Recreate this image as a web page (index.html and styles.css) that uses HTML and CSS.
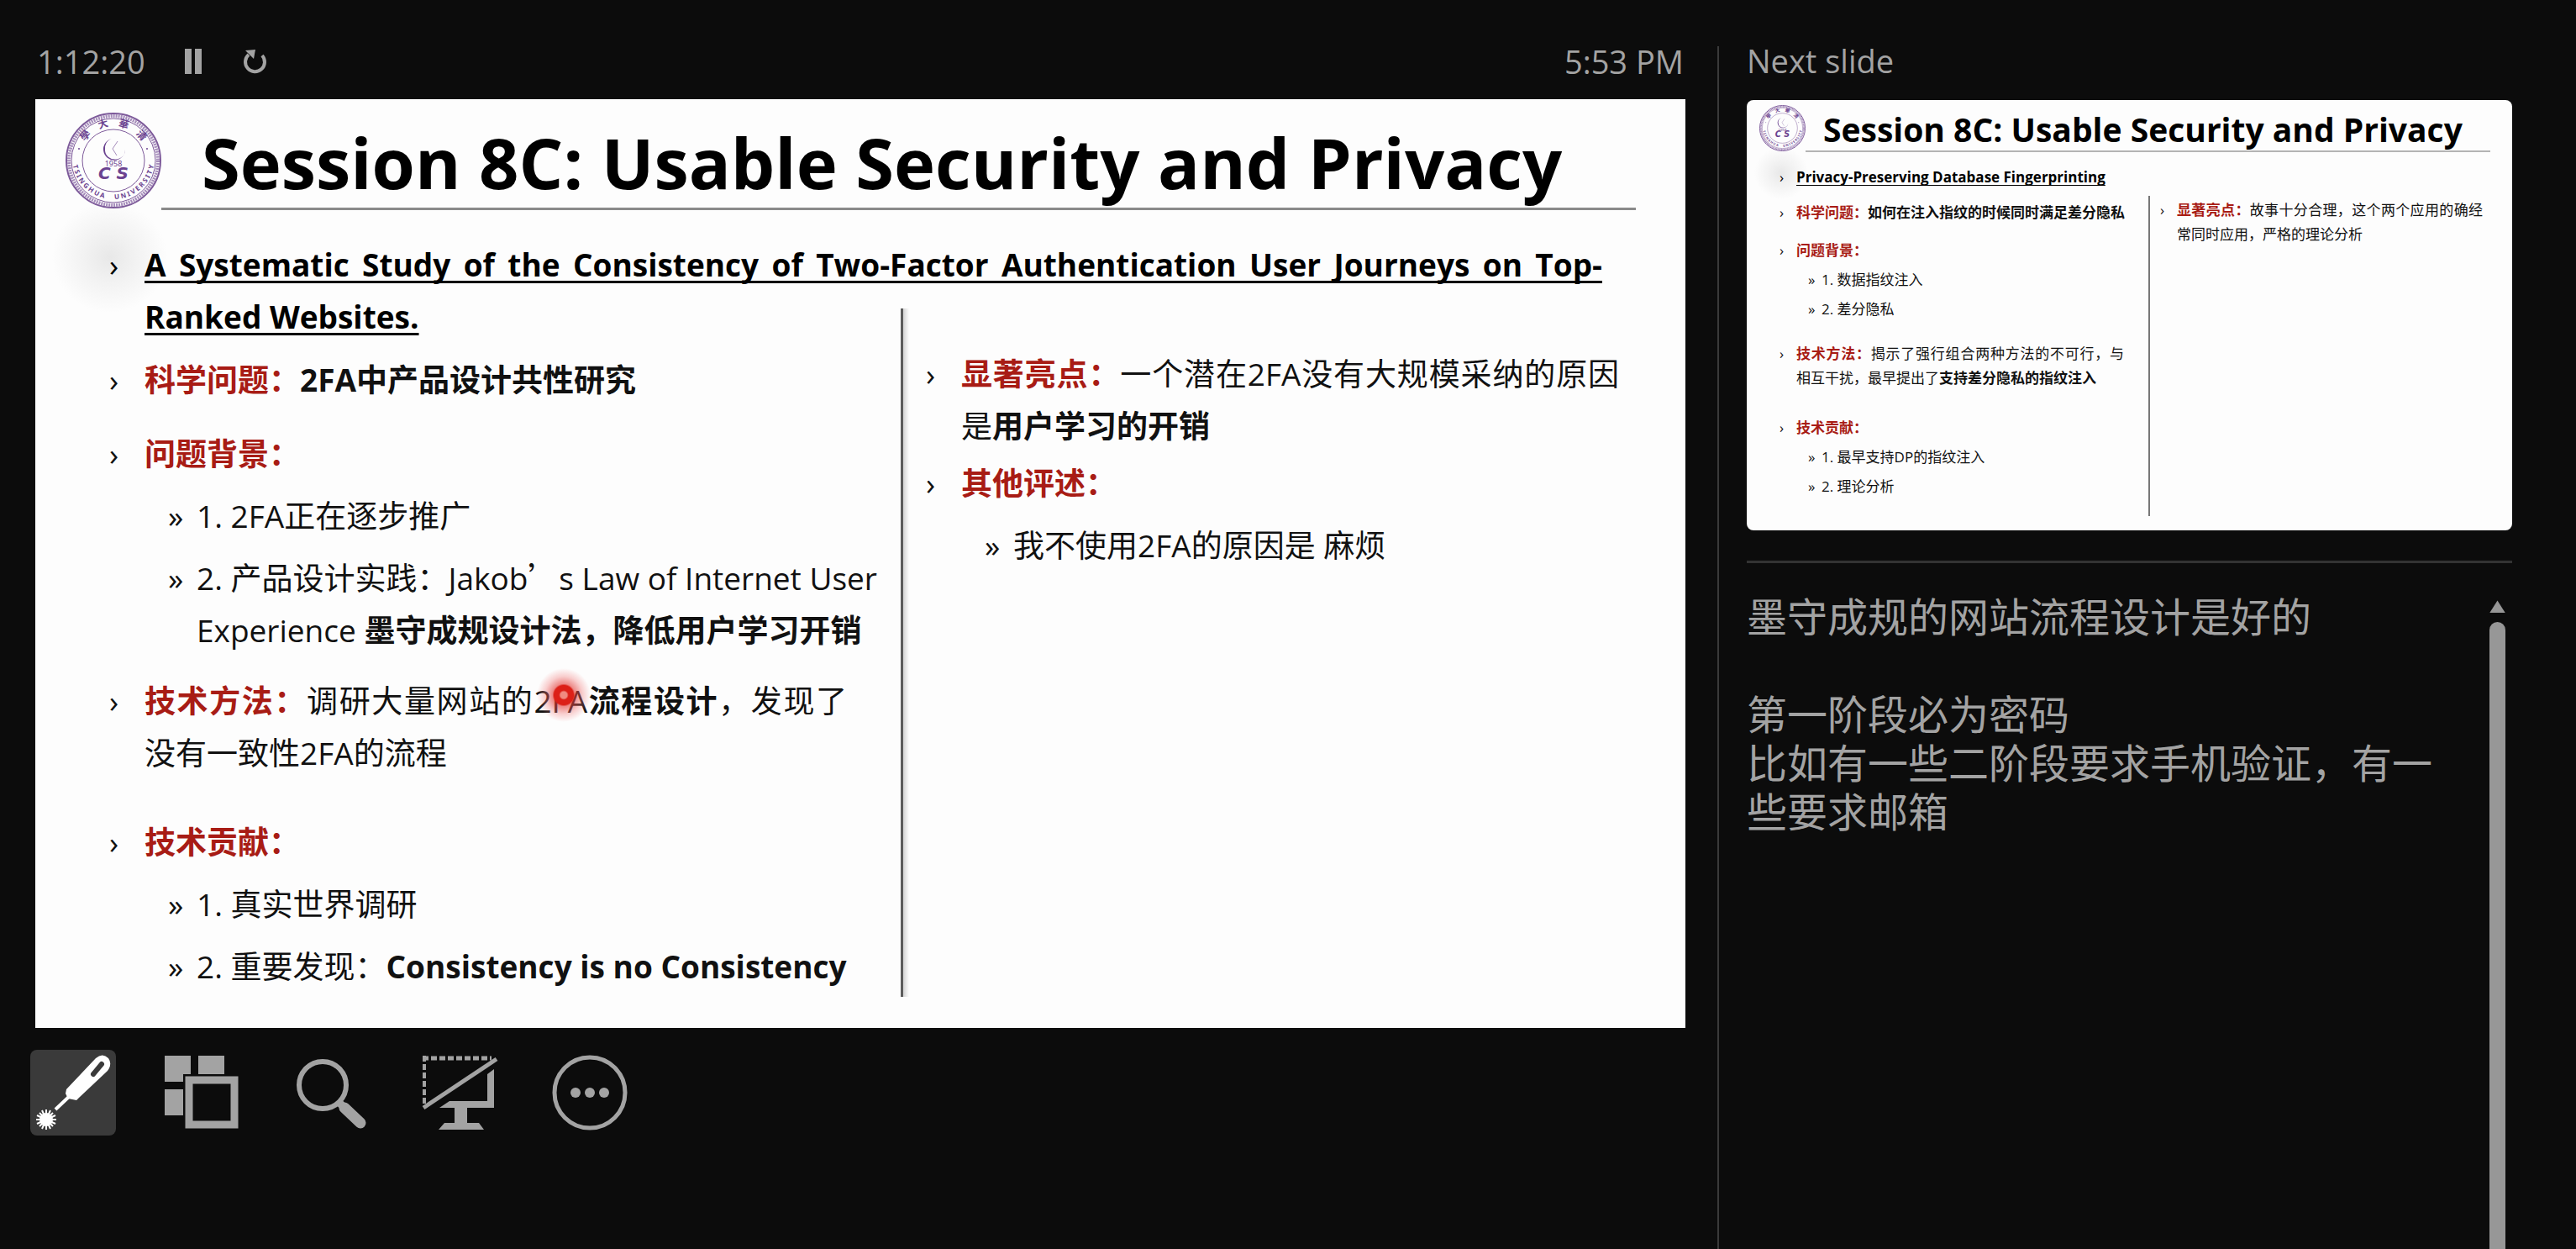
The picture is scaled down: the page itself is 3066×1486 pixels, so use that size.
FILE: index.html
```html
<!DOCTYPE html>
<html lang="zh-CN">
<head>
<meta charset="utf-8">
<title>Presenter View</title>
<link rel="stylesheet" href="styles.css">
</head>
<body>
<svg class="defs" aria-hidden="true">
  <defs>
    <path id="arc-top" d="M16 57 A41 41 0 0 1 98 57"/>
    <path id="arc-bottom" d="M8 54 A49 49 0 0 0 106 54"/>
    <symbol id="seal" viewBox="0 0 114 114">
      <g fill="none" stroke="#7d5a9a">
        <circle cx="57" cy="57" r="56" stroke-width="2"/>
        <circle cx="57" cy="57" r="53" stroke="#a68dbb" stroke-width="4" stroke-dasharray="2 1"/>
        <circle cx="57" cy="57" r="50" stroke-width="1"/>
        <circle cx="57" cy="57" r="37" stroke-width="1"/>
      </g>
      <g fill="#6b4390" font-family="'Noto Sans', sans-serif" font-weight="700">
        <text font-size="12" font-family="'Noto Sans CJK TC', sans-serif" text-anchor="middle"><textPath href="#arc-top" startOffset="50%">學&#160;&#160;&#160;&#160;大&#160;&#160;&#160;&#160;華&#160;&#160;&#160;&#160;清</textPath></text>
        <text font-size="8" text-anchor="middle"><textPath href="#arc-bottom" startOffset="50%">T S I N G H U A&#160;&#160;&#160;&#160;&#160;&#160;U N I V E R S I T Y</textPath></text>
        <text x="57" y="64" font-size="9" font-weight="400" text-anchor="middle">1958</text>
        <text x="57" y="79" font-size="20" font-family="'DejaVu Sans', sans-serif" font-style="italic" text-anchor="middle">C S</text>
        <circle cx="16" cy="43" r="1"/><circle cx="97" cy="43" r="1"/>
        <path d="M55 31 A13 13 0 1 0 71 44 A12 11 0 0 1 47 45 A11 12 0 0 1 55 31Z"/>
        <path d="M62 34 L56 43 L61 51" fill="none" stroke="#a68dbb" stroke-width="1"/>
      </g>
    </symbol>
  </defs>
</svg>

<main class="presenter">
  <section class="current">
    <header class="status">
      <span class="elapsed">1:12:20</span>
      <button class="timer-btn" aria-label="Pause timer">
        <svg viewBox="0 0 22 30" width="22" height="30"><path d="M1 0h8v30H1zM13 0h8v30h-8z" fill="#a3a3a3"/></svg>
      </button>
      <button class="timer-btn" aria-label="Restart timer">
        <svg viewBox="0 0 30 30" width="30" height="30"><path d="M7 7 A11.5 11.5 0 1 0 23 8" fill="none" stroke="#a3a3a3" stroke-width="4"/><path d="M3 2 L15 1 L13 12Z" fill="#a3a3a3"/></svg>
      </button>
      <time class="clock">5:53 PM</time>
    </header>

    <article class="slide">
      <header class="slide-head">
        <svg class="seal" role="img" aria-label="Tsinghua University CS"><use href="#seal"/></svg>
        <h1 class="slide-title">Session 8C: Usable Security and Privacy</h1>
      </header>
      <ul class="points paper">
        <li><p>A Systematic Study of the Consistency of Two-Factor Authentication User Journeys on Top-Ranked Websites.</p></li>
      </ul>
      <div class="columns">
        <ul class="points left">
          <li><p><b class="key">科学问题：</b><b>2FA中产品设计共性研究</b></p></li>
          <li class="gap-l"><p><b class="key">问题背景：</b></p></li>
          <li class="sub"><p>1. 2FA正在逐步推广</p></li>
          <li class="sub"><p>2. 产品设计实践：Jakob<span class="wide">’</span>s Law of Internet User Experience <b>墨守成规设计法，降低用户学习开销</b></p></li>
          <li class="gap-m"><p><b class="key">技术方法：</b>调研大量网站的2FA<b>流程设计</b>，发现了没有一致性2FA的流程</p></li>
          <li class="gap-xl"><p><b class="key">技术贡献：</b></p></li>
          <li class="sub"><p>1. 真实世界调研</p></li>
          <li class="sub"><p>2. 重要发现：<b>Consistency is no Consistency</b></p></li>
        </ul>
        <ul class="points right">
          <li><p><b class="key">显著亮点：</b>一个潜在2FA没有大规模采纳的原因是<b>用户学习的开销</b></p></li>
          <li class="gap-s"><p><b class="key">其他评述：</b></p></li>
          <li class="sub"><p>我不使用2FA的原因是 麻烦</p></li>
        </ul>
      </div>
      <span class="laser"></span>
    </article>

    <nav class="tools" aria-label="Presenter tools">
      <button class="tool active" aria-label="Laser pointer">
        <svg viewBox="0 0 102 102"><g fill="#fff"><path d="M43 47 L78 10 Q86 3 93 10 Q98 17 92 25 L58 57 L55 60 L45 58 L42 52Z"/><path d="M30 71 L48 54" stroke="#fff" stroke-width="4"/><path d="M85 17 L75 29" stroke="#3a3a3a" stroke-width="6" stroke-linecap="round"/><circle cx="19" cy="83" r="8"/><path d="M19 71v24M7 83h24M11 75l16 16M27 75l-16 16M14 72l10 22M24 72l-10 22M8 78l22 10M30 78l-22 10" stroke="#fff" stroke-width="2"/></g></svg>
      </button>
      <button class="tool" aria-label="See all slides">
        <svg viewBox="0 0 102 102"><path d="M6 7h31v31H6zM46 7h31v22H46zM6 47h31v31H6z" fill="#a3a3a3"/><path d="M28 29h66v66H28z" fill="#0c0c0c"/><path d="M35 36h54v53H35z" fill="none" stroke="#a3a3a3" stroke-width="9"/></svg>
      </button>
      <button class="tool" aria-label="Zoom into slide">
        <svg viewBox="0 0 102 102"><g fill="none" stroke="#a3a3a3"><circle cx="40" cy="42" r="28" stroke-width="6"/><path d="M59 62 L64 67" stroke-width="9"/><path d="M66 69 L85 87" stroke-width="13" stroke-linecap="round"/></g></svg>
      </button>
      <button class="tool" aria-label="Black slide show">
        <svg viewBox="0 0 102 102"><g fill="none" stroke="#a3a3a3"><path d="M5 10h82" stroke-width="5" stroke-dasharray="7 3"/><path d="M7 7v58" stroke-width="4" stroke-dasharray="7 3"/><path d="M6 69 L93 11" stroke-width="5"/></g><path d="M82 29l8-6v46H25l12-8h45zM43 69h15v19H43zM31 87h41l6 8H24z" fill="#a3a3a3"/></svg>
      </button>
      <button class="tool" aria-label="More options">
        <svg viewBox="0 0 102 102"><circle cx="50" cy="51" r="42" fill="none" stroke="#a3a3a3" stroke-width="5"/><g fill="#a3a3a3"><circle cx="33" cy="51" r="6"/><circle cx="50" cy="51" r="6"/><circle cx="67" cy="51" r="6"/></g></svg>
      </button>
    </nav>
  </section>

  <aside class="side">
    <h2 class="side-title">Next slide</h2>
    <article class="slide next">
      <header class="slide-head">
        <svg class="seal" role="img" aria-label="Tsinghua University CS"><use href="#seal"/></svg>
        <h3 class="slide-title">Session 8C: Usable Security and Privacy</h3>
      </header>
      <ul class="points paper">
        <li><p>Privacy-Preserving Database Fingerprinting</p></li>
      </ul>
      <div class="columns">
        <ul class="points left">
          <li class="one-line"><p><b class="key">科学问题：</b><b>如何在注入指纹的时候同时满足差分隐私</b></p></li>
          <li class="gap-l"><p><b class="key">问题背景：</b></p></li>
          <li class="sub"><p>1. 数据指纹注入</p></li>
          <li class="sub"><p>2. 差分隐私</p></li>
          <li class="gap-m"><p><b class="key">技术方法：</b>揭示了强行组合两种方法的不可行，与相互干扰，最早提出了<b>支持差分隐私的指纹注入</b></p></li>
          <li class="gap-xl"><p><b class="key">技术贡献：</b></p></li>
          <li class="sub"><p>1. 最早支持DP的指纹注入</p></li>
          <li class="sub"><p>2. 理论分析</p></li>
        </ul>
        <ul class="points right">
          <li><p><b class="key">显著亮点：</b>故事十分合理，这个两个应用的确经常同时应用，严格的理论分析</p></li>
        </ul>
      </div>
    </article>

    <section class="notes" aria-label="Notes">
      <div class="notes-text">
        <p>墨守成规的网站流程设计是好的</p>
        <p>&#160;</p>
        <p>第一阶段必为密码</p>
        <p>比如有一些二阶段要求手机验证，有一些要求邮箱</p>
      </div>
      <div class="scroll">
        <button class="scroll-up" aria-label="Scroll up"></button>
        <div class="scroll-thumb"></div>
      </div>
    </section>
  </aside>
</main>
</body>
</html>
```
FILE: styles.css
```css
* { box-sizing: border-box; }

body {
  margin: 0;
  background: #0c0c0c;
  color: #a3a3a3;
  font-family: "Open Sans", "Noto Sans", "Noto Sans CJK SC", sans-serif;
}

h1, h2, h3, p, ul { margin: 0; padding: 0; }
ul { list-style: none; }
button { padding: 0; border: 0; background: none; color: inherit; cursor: pointer; }
svg { display: block; }
.defs { position: absolute; width: 0; height: 0; }

.presenter {
  display: grid;
  grid-template-columns: minmax(0, 2fr) minmax(0, 1fr);
  min-height: 100vh;
}

/* current slide side */
.current { padding: 0 38px 0 42px; }

.status {
  display: flex;
  align-items: center;
  height: 118px;
  padding: 28px 2px 0;
  font-size: 38px;
  line-height: 52px;
}
.elapsed { margin-right: 46px; }
.timer-btn { margin-right: 48px; }
.clock { margin-left: auto; }

.slide {
  --text: 37px;
  --line: 62px;
  --mark: 42px;
  --sub-indent: 70px;
  --sub-mark: 34px;
  position: relative;
  display: flex;
  flex-direction: column;
  aspect-ratio: 16 / 9;
  background: #fdfdfd;
  color: #111;
  font-size: var(--text);
  line-height: var(--line);
}

/* faint smudge under the seal */
.slide::before {
  content: "";
  position: absolute;
  left: 1%;
  top: 11%;
  width: 7%;
  height: 12%;
  background: radial-gradient(closest-side, #e8e8e8, #f2f2f2 45%, #fdfdfd);
}

.slide-head {
  position: relative;
  display: flex;
  padding: 16px 59px 0 36px;
}
.seal { flex: none; width: 114px; height: 114px; }
.slide-title {
  flex: 1;
  padding-left: 48px;
  border-bottom: 3px solid #8a8a8a;
  color: #000;
  font-size: 83px;
  font-weight: 700;
  line-height: 118px;
  height: 116px;
  white-space: nowrap;
}

.points { position: relative; }
.points li {
  display: grid;
  grid-template-columns: var(--mark) minmax(0, 1fr);
  text-align: justify;
}
.points li::before { content: "›"; }
.points .sub {
  grid-template-columns: var(--sub-mark) minmax(0, 1fr);
  margin-left: var(--sub-indent);
  text-align: left;
}
.points .sub::before { content: "»"; }
.key { color: #a81c15; }
.wide { font-family: "Noto Sans CJK SC", sans-serif; line-height: 1; }

.paper {
  padding: 34px 99px 0 88px;
  color: #000;
}
.paper p {
  font-weight: 700;
  text-decoration: underline;
  text-decoration-thickness: 3px;
  text-underline-offset: 5px;
  text-decoration-skip-ink: none;
}

.columns {
  flex: 1;
  display: grid;
  grid-template-columns: minmax(0, 1030fr) minmax(0, 934fr);
  padding-bottom: 37px;
}
.left { padding: 13px 2px 0 88px; }
.left li:not(.sub) { margin-right: 62px; }
.left .sub, .right .sub { margin-top: 12px; }
.right {
  margin-top: -41px;
  padding: 47px 79px 0 27px;
  border-left: 3px solid #5c5c5c;
  background: linear-gradient(to right, #d4d4d4, #fdfdfd 7px) no-repeat;
}
.gap-s { margin-top: 6px; }
.gap-m { margin-top: 22px; }
.gap-l { margin-top: 26px; }
.gap-xl { margin-top: 44px; }

/* laser dot lies over the slide */
.laser {
  position: absolute;
  left: 32%;
  top: 64%;
  width: 64px;
  height: 64px;
  margin: -30px 0 0 -31px;
  border-radius: 50%;
  background: radial-gradient(closest-side, #f08a80 0 12%, #dc2018 18% 36%, rgba(226, 60, 56, .6) 42%, rgba(240, 120, 120, .35) 70%, rgba(255, 200, 200, 0));
}

.tools {
  display: flex;
  gap: 52px;
  margin: 26px 0 0 -6px;
}
.tool { width: 102px; height: 102px; border-radius: 8px; }
.tool.active { background: #3a3a3a; }

/* next slide and notes side */
.side {
  display: flex;
  flex-direction: column;
  margin-top: 55px;
  padding: 0 76px 0 33px;
  border-left: 2px solid #3a3a3a;
}
.side-title {
  height: 64px;
  font-size: 38px;
  font-weight: 400;
  line-height: 34px;
}

.next {
  --text: 17px;
  --line: 29px;
  --mark: 20px;
  --sub-indent: 34px;
  --sub-mark: 16px;
  border-radius: 8px;
}
.next .slide-head { padding: 6px 26px 0 15px; }
.next .seal { width: 55px; height: 55px; }
.next .slide-title {
  height: 56px;
  padding-left: 21px;
  border-bottom: 2px solid #b4b4b4;
  font-size: 39px;
  line-height: 57px;
}
.next .paper { padding: 15px 26px 0 39px; }
.next .paper p { text-decoration-thickness: 1px; text-underline-offset: 3px; }
.next .columns {
  grid-template-columns: minmax(0, 478fr) minmax(0, 433fr);
  padding-bottom: 17px;
}
.next .left { padding: 13px 2px 0 39px; }
.next .left li:not(.sub) { margin-right: 27px; }
.next .left .sub { margin-top: 6px; }
.next .one-line { white-space: nowrap; }
.next .right {
  margin-top: 8px;
  padding: 2px 35px 0 12px;
  border-left: 2px solid #777;
  background: none;
}
.next .gap-m { margin-top: 24px; }
.next .gap-l { margin-top: 16px; }
.next .gap-xl { margin-top: 30px; }

.notes {
  flex: 1;
  display: flex;
  justify-content: space-between;
  margin-top: 36px;
  border-top: 3px solid #333;
  font-size: 48px;
  line-height: 58px;
}
.notes-text { width: 850px; padding-top: 35px; }

.scroll {
  display: flex;
  flex-direction: column;
  width: 35px;
  margin: 32px 0 0;
  padding: 12px 8px 0;
}
.scroll-up {
  width: 19px;
  height: 15px;
  background: #979797;
  clip-path: polygon(50% 0, 100% 100%, 0 100%);
}
.scroll-thumb {
  flex: 1;
  width: 19px;
  margin-top: 11px;
  border-radius: 10px 10px 0 0;
  background: #979797;
}
```
